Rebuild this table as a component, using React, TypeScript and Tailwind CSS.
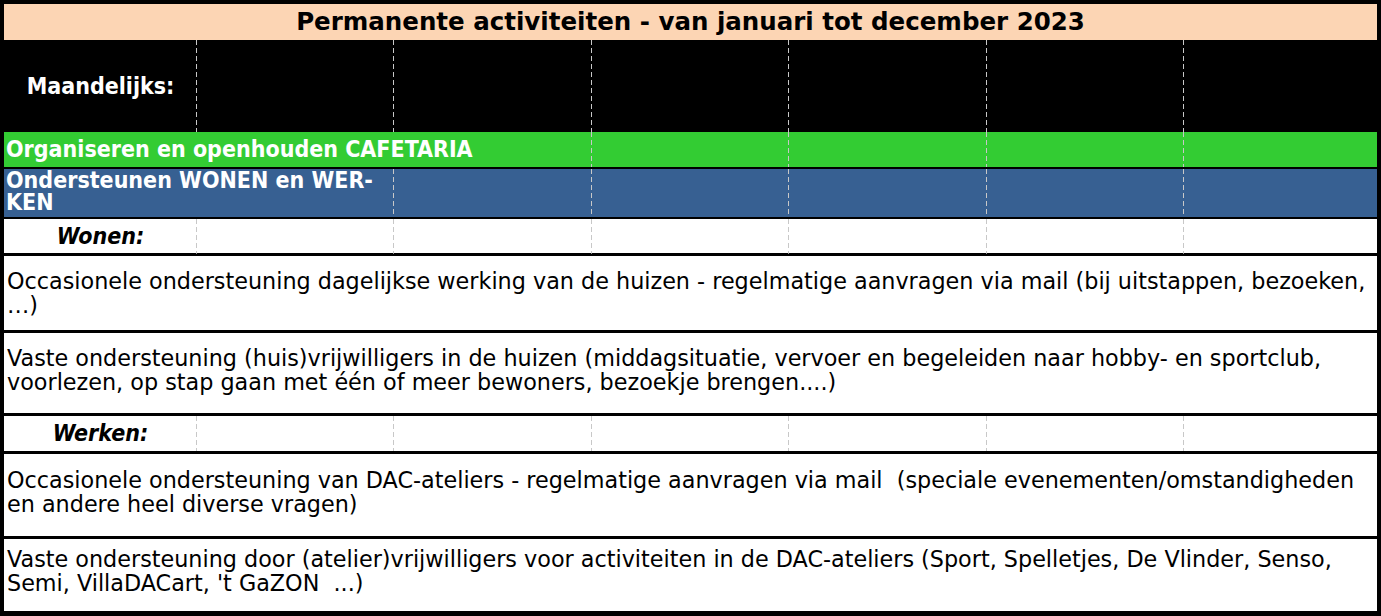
import React from "react";

const dashed =
  "bg-[repeating-linear-gradient(to_bottom,#c8c8c8_0px,#c8c8c8_5px,transparent_5px,transparent_8px)] bg-[length:1px_100%] bg-right bg-no-repeat";

const cols = "grid grid-cols-[193px_repeat(5,197.4px)_1fr]";
const body = "bg-white pl-[3px] text-[22.3px] leading-[24px] whitespace-pre font-['DejaVu_Sans',sans-serif]";
const label = "font-bold text-[23px]";

// one table row split in 7 columns, first cell may span a few
function Cols({ span = 1, first }: { span?: number; first: React.ReactNode }) {
  const rest = Array.from({ length: 7 - span });
  return (
    <>
      <div
        className={`${span === 3 ? "col-span-3" : span === 2 ? "col-span-2" : ""} ${dashed} flex items-center`}
      >
        {first}
      </div>
      {rest.map((_, i) => (
        <div key={i} className={i < rest.length - 1 ? dashed : ""} />
      ))}
    </>
  );
}

export default function App() {
  return (
    <div className="w-[1381px] h-[616px] bg-black pt-[4px] pb-[5px] px-[4px] font-['DejaVu_Sans_Condensed','DejaVu_Sans',sans-serif] text-black overflow-hidden">
      {/* title */}
      <div className="h-[36px] bg-[#fcd5b4] flex items-center justify-center text-[24.5px] font-bold leading-none font-['DejaVu_Sans',sans-serif]">
        Permanente activiteiten - van januari tot december 2023
      </div>

      {/* Maandelijks */}
      <div className={`h-[92px] ${cols}`}>
        <Cols
          first={<div className={`w-full text-center text-white ${label}`}>Maandelijks:</div>}
        />
      </div>

      {/* cafetaria */}
      <div className={`h-[35px] bg-[#33cc33] ${cols}`}>
        <Cols
          span={3}
          first={
            <div className={`pl-[2px] text-white whitespace-nowrap ${label}`}>
              Organiseren en openhouden CAFETARIA
            </div>
          }
        />
      </div>

      {/* wonen en werken */}
      <div className={`mt-[2px] h-[48px] bg-[#376092] ${cols}`}>
        <Cols
          span={2}
          first={
            <div className={`self-start pl-[2px] text-white leading-[22px] whitespace-nowrap ${label}`}>
              Ondersteunen WONEN en WER-
              <br />
              KEN
            </div>
          }
        />
      </div>

      <div className={`mt-[2px] h-[34px] bg-white ${cols}`}>
        <Cols first={<div className={`w-full text-center italic ${label}`}>Wonen:</div>} />
      </div>

      <div className={`mt-[3px] h-[74px] pt-[13px] ${body}`}>
        Occasionele ondersteuning dagelijkse werking van de huizen - regelmatige aanvragen via mail (bij uitstappen, bezoeken,
        <br />
        …)
      </div>

      <div className={`mt-[3px] h-[80px] pt-[13px] ${body}`}>
        Vaste ondersteuning (huis)vrijwilligers in de huizen (middagsituatie, vervoer en begeleiden naar hobby- en sportclub,
        <br />
        voorlezen, op stap gaan met één of meer bewoners, bezoekje brengen....)
      </div>

      <div className={`mt-[3px] h-[35px] bg-white ${cols}`}>
        <Cols first={<div className={`w-full text-center italic ${label}`}>Werken:</div>} />
      </div>

      <div className={`mt-[3px] h-[82px] pt-[14px] ${body}`}>
        {"Occasionele ondersteuning van DAC-ateliers - regelmatige aanvragen via mail  (speciale evenementen/omstandigheden"}
        <br />
        en andere heel diverse vragen)
      </div>

      <div className={`mt-[3px] h-[72px] pt-[8px] ${body}`}>
        Vaste ondersteuning door (atelier)vrijwilligers voor activiteiten in de DAC-ateliers (Sport, Spelletjes, De Vlinder, Senso,
        <br />
        {"Semi, VillaDACart, 't GaZON  ...)"}
      </div>
    </div>
  );
}
